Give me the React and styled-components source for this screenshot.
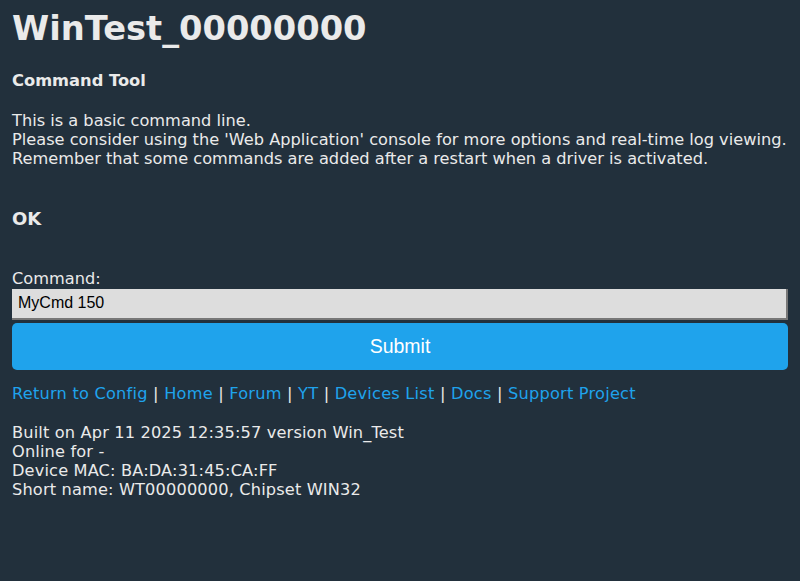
import React from "react";
import styled, { createGlobalStyle } from "styled-components";

const GlobalStyle = createGlobalStyle`
  html, body {
    margin: 0;
    padding: 0;
    background: #22303c;
  }
  body {
    color: #eaeaea;
    font-family: "DejaVu Sans", Verdana, sans-serif;
    font-size: 16.2px;
  }
`;

const Page = styled.div`
  padding: 6px 12px 20px 12px;
  min-height: 555px;
`;

const Title = styled.h1`
  margin: 0 0 19px 0;
  font-size: 33.7px;
  font-weight: bold;
  line-height: 46px;
`;

const SubTitle = styled.h3`
  margin: 0 0 21px 0;
  font-size: 16.3px;
  font-weight: bold;
  line-height: 19px;
`;

const Para = styled.p`
  margin: 0;
  line-height: 19.2px;
`;

const Status = styled.h3`
  margin: 39px 0 0 0;
  font-size: 18px;
  font-weight: bold;
  line-height: 22px;
`;

const Form = styled.form`
  display: flex;
  flex-direction: column;
  margin-top: 39px;
`;

const Label = styled.label`
  line-height: 19px;
  margin-bottom: 1px;
`;

const Input = styled.input`
  box-sizing: border-box;
  width: 100%;
  height: 31px;
  padding: 4px 6px;
  background: #dddddd;
  color: #000;
  border: 0;
  border-bottom: 2px solid #777;
  border-right: 2px solid #777;
  font-family: "Liberation Sans", Arial, sans-serif;
  font-size: 16px;
  outline: none;
`;

const Button = styled.button`
  margin-top: 3px;
  height: 47px;
  width: 100%;
  border: 0;
  border-radius: 5px;
  background: #1fa3ec;
  color: #fff;
  font-family: "Liberation Sans", Arial, sans-serif;
  font-size: 19.5px;
`;

const Links = styled.div`
  margin-top: 14px;
  line-height: 20px;
  letter-spacing: 0.22px;
`;

const Link = styled.a`
  color: #1fa3ec;
  text-decoration: none;
`;

const Footer = styled.div`
  margin-top: 19px;
  line-height: 19.2px;
  letter-spacing: 0.15px;
`;

const links = [
  "Return to Config",
  "Home",
  "Forum",
  "YT",
  "Devices List",
  "Docs",
  "Support Project",
];

export default function App() {
  return (
    <>
      <GlobalStyle />
      <Page>
        <Title>WinTest_00000000</Title>
        <SubTitle>Command Tool</SubTitle>
        <Para>
          This is a basic command line.
          <br />
          Please consider using the 'Web Application' console for more options and real-time log viewing.
          <br />
          Remember that some commands are added after a restart when a driver is activated.
        </Para>
        <Status>OK</Status>
        <Form onSubmit={(e) => e.preventDefault()}>
          <Label htmlFor="cmd">Command:</Label>
          <Input id="cmd" defaultValue="MyCmd 150" />
          <Button type="submit">Submit</Button>
        </Form>
        <Links>
          {links.map((l, i) => (
            <React.Fragment key={l}>
              {i > 0 && " | "}
              <Link href="#">{l}</Link>
            </React.Fragment>
          ))}
        </Links>
        <Footer>
          Built on Apr 11 2025 12:35:57 version Win_Test
          <br />
          Online for -
          <br />
          Device MAC: BA:DA:31:45:CA:FF
          <br />
          Short name: WT00000000, Chipset WIN32
        </Footer>
      </Page>
    </>
  );
}
